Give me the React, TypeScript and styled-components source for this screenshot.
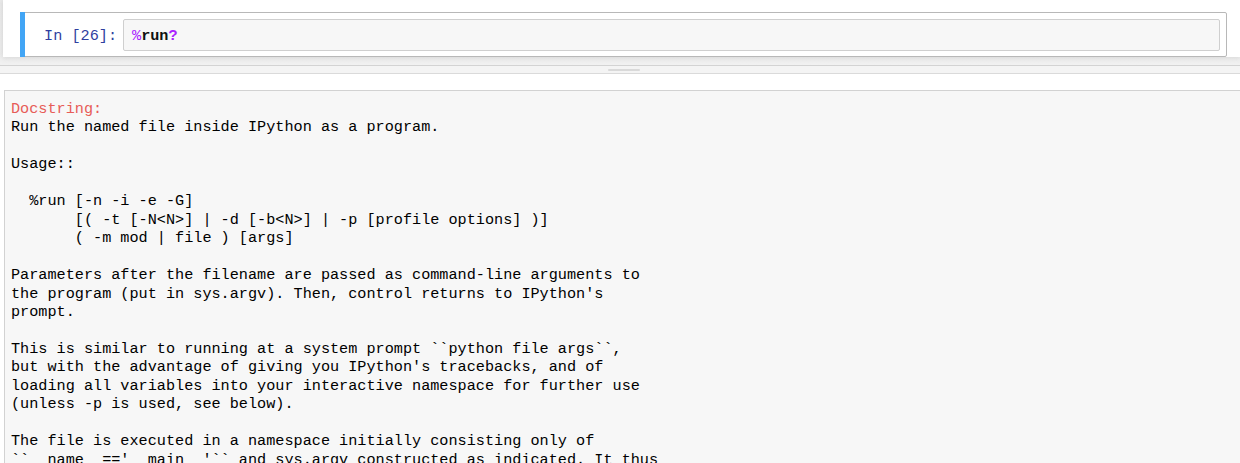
import React from "react";
import styled, { createGlobalStyle } from "styled-components";

const GlobalStyle = createGlobalStyle`
  html, body {
    margin: 0;
    padding: 0;
    background: #ffffff;
    overflow: hidden;
  }
  body {
    font-family: "Liberation Mono", "DejaVu Sans Mono", monospace;
  }
`;

const Page = styled.div`
  width: 1240px;
  height: 463px;
  display: flex;
  flex-direction: column;
  overflow: hidden;
`;

const Site = styled.div`
  height: 65px;
  flex: none;
  padding-left: 3px;
  background: linear-gradient(#eeeeee, #f1f1f1);
  box-sizing: border-box;
`;

const Container = styled.div`
  height: 57px;
  background: #ffffff;
  box-shadow: 0 0 6px 1px rgba(87, 87, 87, 0.18);
  padding: 12px 13px 0 17px;
  box-sizing: border-box;
`;

const Cell = styled.div`
  position: relative;
  display: flex;
  align-items: stretch;
  height: 45px;
  box-sizing: border-box;
  border: 1px solid #b8b8b8;
  border-radius: 2px;
  padding: 6px 6px 5px 5px;

  &::before {
    content: "";
    position: absolute;
    left: -1px;
    top: -1px;
    bottom: -1px;
    width: 5px;
    background: #42a5f5;
  }
`;

const Prompt = styled.div`
  width: 97px;
  flex: none;
  box-sizing: border-box;
  padding: 3px 6px 0 0;
  text-align: right;
  color: #303f9f;
  font-size: 15.2px;
  line-height: 28px;
  white-space: pre;
`;

const InputArea = styled.div`
  flex: 1;
  box-sizing: border-box;
  border: 1px solid #cfcfcf;
  border-radius: 2px;
  background: #f7f7f7;
  padding: 2px 0 0 8px;
  font-size: 15.2px;
  line-height: 28px;
  color: #000000;
  white-space: pre;
`;

const Op = styled.span<{ $bold?: boolean }>`
  color: #aa22ff;
  font-weight: ${(p) => (p.$bold ? 700 : 400)};
`;

const Magic = styled.span`
  font-weight: 700;
  color: #111111;
`;

const Pager = styled.div`
  flex: 1;
  display: flex;
  flex-direction: column;
  border-top: 1px solid #d3d3d3;
  background: #ffffff;
  min-height: 0;
`;

const Splitter = styled.div`
  height: 7px;
  flex: none;
  display: flex;
  align-items: center;
  justify-content: center;
  background: #f4f4f4;
  border-bottom: 1px solid #dadada;
  padding-left: 8px;
`;

const Handle = styled.div`
  width: 32px;
  height: 2px;
  background: #d9d9d9;
  border-radius: 1px;
`;

const PagerBody = styled.div`
  flex: 1;
  padding: 16px 0 0 4px;
  min-height: 0;
  display: flex;
`;

const PagerContent = styled.pre`
  flex: 1;
  margin: 0;
  border: 1px solid #d2d2d2;
  border-right: none;
  border-bottom: none;
  background: #f7f7f7;
  padding: 9px 6px 0;
  font-family: "Liberation Mono", "DejaVu Sans Mono", monospace;
  font-size: 15.2px;
  line-height: 18.45px;
  color: #000000;
  white-space: pre;
  overflow: hidden;
`;

const Heading = styled.span`
  color: #e75c58;
`;

const docText = `Run the named file inside IPython as a program.

Usage::

  %run [-n -i -e -G]
       [( -t [-N<N>] | -d [-b<N>] | -p [profile options] )]
       ( -m mod | file ) [args]

Parameters after the filename are passed as command-line arguments to
the program (put in sys.argv). Then, control returns to IPython's
prompt.

This is similar to running at a system prompt \`\`python file args\`\`,
but with the advantage of giving you IPython's tracebacks, and of
loading all variables into your interactive namespace for further use
(unless -p is used, see below).

The file is executed in a namespace initially consisting only of
\`\`__name__=='__main__'\`\` and sys.argv constructed as indicated. It thus`;

export default function App() {
  return (
    <Page>
      <GlobalStyle />
      <Site>
        <Container>
          <Cell>
            <Prompt>In [26]:</Prompt>
            <InputArea>
              <Op>%</Op>
              <Magic>run</Magic>
              <Op $bold>?</Op>
            </InputArea>
          </Cell>
        </Container>
      </Site>
      <Pager>
        <Splitter>
          <Handle />
        </Splitter>
        <PagerBody>
          <PagerContent>
            <Heading>Docstring:</Heading>
            {"\n"}
            {docText}
          </PagerContent>
        </PagerBody>
      </Pager>
    </Page>
  );
}
